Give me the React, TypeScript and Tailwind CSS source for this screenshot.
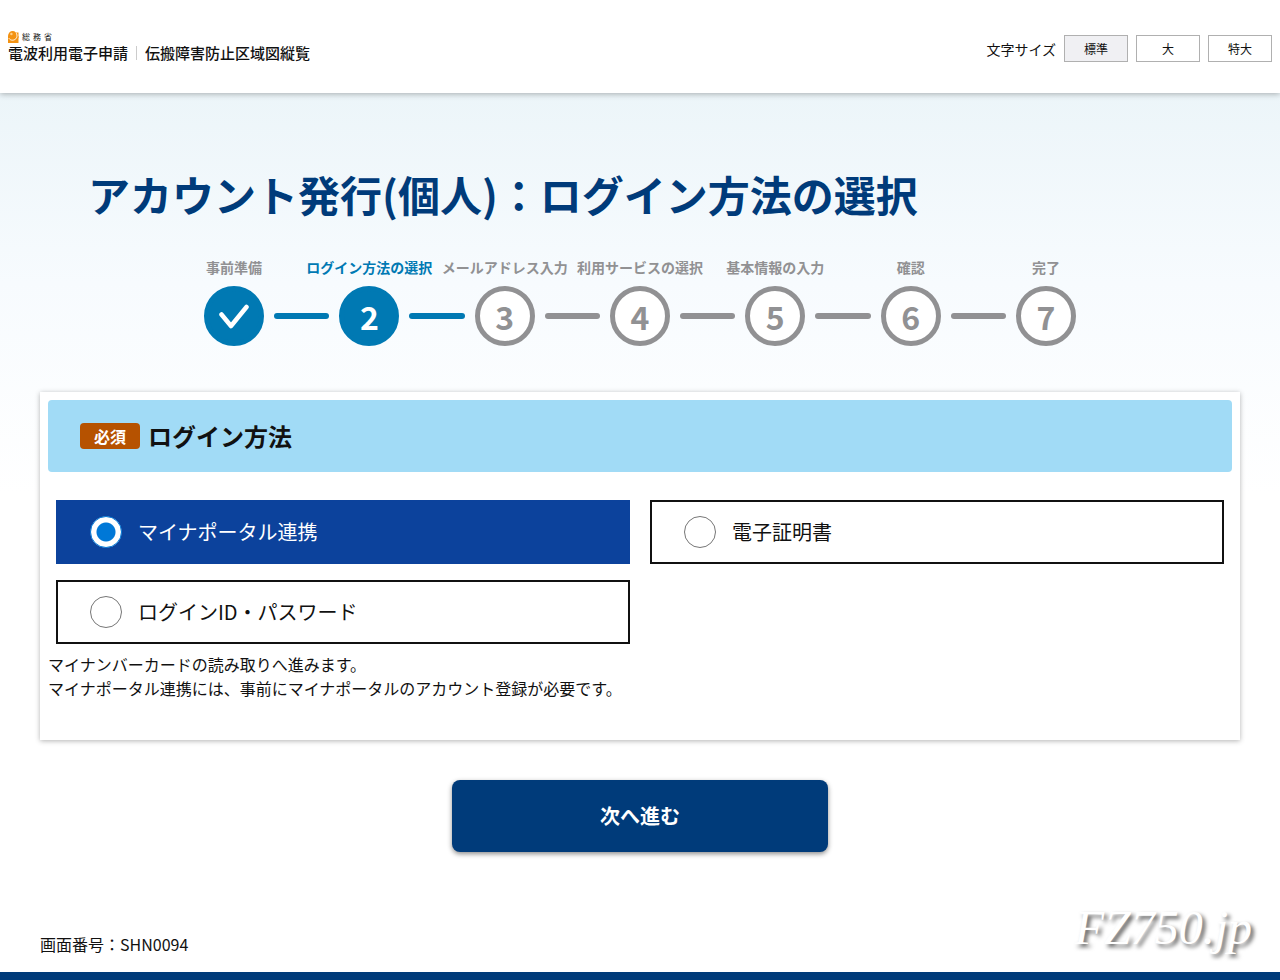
import { useState } from "react";

const STEPS = [
  "事前準備",
  "ログイン方法の選択",
  "メールアドレス入力",
  "利用サービスの選択",
  "基本情報の入力",
  "確認",
  "完了",
];
const CURRENT = 1;

const SIZES = ["標準", "大", "特大"];

const METHODS = [
  { id: "myna", label: "マイナポータル連携" },
  { id: "cert", label: "電子証明書" },
  { id: "password", label: "ログインID・パスワード" },
];

export default function App() {
  const [method, setMethod] = useState("myna");

  return (
    <div className="flex min-h-screen flex-col bg-white font-['Noto_Sans_CJK_JP',sans-serif] text-[#111]">
      <Header />

      <main className="flex-1 bg-[linear-gradient(to_bottom,#ecf5f9_0px,#f7fbfe_190px,#ffffff_400px)] px-10 pt-[70px]">
        <h1 className="px-12 text-[42px] leading-[62px] font-bold text-[#003b7a]">
          アカウント発行(個人)：ログイン方法の選択
        </h1>

        <Stepper />

        <section className="mt-[46px] bg-white p-2 pb-10 shadow-[0_1px_5px_rgba(0,0,0,0.3)]">
          <div className="flex h-[72px] items-center gap-2 rounded bg-[#a1dbf6] px-8">
            <span className="rounded bg-[#b65200] px-[14px] py-px text-base leading-6 font-bold text-white">
              必須
            </span>
            <h2 id="method-title" className="text-2xl font-bold">
              ログイン方法
            </h2>
          </div>

          <div
            role="radiogroup"
            aria-labelledby="method-title"
            className="mt-7 grid grid-cols-2 gap-x-5 gap-y-4 px-2"
          >
            {METHODS.map((m) => (
              <label
                key={m.id}
                className={`flex h-16 cursor-pointer items-center gap-4 border-2 px-8 text-xl ${
                  method === m.id
                    ? "border-[#0c429c] bg-[#0c429c] text-white"
                    : "border-[#111] bg-white"
                }`}
              >
                <input
                  type="radio"
                  name="method"
                  value={m.id}
                  checked={method === m.id}
                  onChange={() => setMethod(m.id)}
                  className="size-8 shrink-0 appearance-none rounded-full border border-[#767676] bg-white checked:border-[#0078d7] checked:bg-[radial-gradient(circle,#0078d7_9px,#ffffff_10px)]"
                />
                {m.label}
              </label>
            ))}
          </div>

          <p className="mt-2 text-base leading-6">
            マイナンバーカードの読み取りへ進みます。
            <br />
            マイナポータル連携には、事前にマイナポータルのアカウント登録が必要です。
          </p>
        </section>

        <div className="mt-10 flex justify-center">
          <button
            type="button"
            className="h-[72px] w-full max-w-[376px] rounded-lg bg-[#003b7a] text-xl font-bold text-white shadow-[0_2px_5px_rgba(0,0,0,0.45)]"
          >
            次へ進む
          </button>
        </div>
      </main>

      <footer className="flex items-end justify-between border-b-8 border-[#003b7a] pr-7 pb-4 pl-10">
        <p className="text-base leading-6">画面番号：SHN0094</p>
        <span className="pb-1 font-['Liberation_Serif',serif] text-5xl text-white italic [text-shadow:3px_3px_4px_rgba(0,0,0,0.65)]">
          FZ750.jp
        </span>
      </footer>
    </div>
  );
}

function Header() {
  const [size, setSize] = useState("標準");

  return (
    <header className="relative z-10 flex h-[93px] items-center justify-between bg-white px-2 shadow-[0_1px_6px_rgba(0,0,0,0.3)]">
      <a href="#" className="flex flex-col">
        <span className="flex items-center gap-[3px] text-[8px] leading-3">
          <svg width="11" height="12" viewBox="0 0 11 12" aria-hidden>
            <path d="M0 5h10.5v7H0z" fill="#f39212" />
            <path d="M6 1.5h4.5V7H6z" fill="#f39212" />
            <circle cx="4.6" cy="4.6" r="4.5" fill="#f39212" />
            <path
              d="M.8 7.2C2.8 10.2 7 9.7 8.5 6.8 9.3 5.2 9.1 3 8 1.6"
              fill="none"
              stroke="#fff"
              strokeWidth=".9"
            />
            <circle cx="3.4" cy="3" r="1.2" fill="#ffd08a" />
          </svg>
          <span className="flex gap-[3px]">
            <span>総</span>
            <span>務</span>
            <span>省</span>
          </span>
        </span>
        <span className="flex items-center text-[15px] leading-5 font-medium">
          電波利用電子申請
          <span className="mx-2 h-[14px] w-px bg-[#ccc]" />
          伝搬障害防止区域図縦覧
        </span>
      </a>

      <div className="flex items-center gap-2 pt-1">
        <span className="text-sm">文字サイズ</span>
        {SIZES.map((s) => (
          <button
            key={s}
            type="button"
            aria-pressed={size === s}
            onClick={() => setSize(s)}
            className={`h-[27px] w-16 border border-[#b0b0b0] text-xs ${
              size === s ? "bg-[#f0f0f3]" : "bg-white"
            }`}
          >
            {s}
          </button>
        ))}
      </div>
    </header>
  );
}

function Stepper() {
  return (
    <ol className="mx-auto mt-8 flex max-w-[872px]">
      {STEPS.map((label, i) => {
        const active = i <= CURRENT;
        return (
          <li
            key={label}
            aria-current={i === CURRENT ? "step" : undefined}
            className="flex flex-1 items-end last:flex-none"
          >
            <div className="flex w-[60px] shrink-0 flex-col items-center gap-2">
              <span
                className={`text-sm leading-[21px] font-bold whitespace-nowrap ${
                  i === CURRENT ? "text-[#0079b3]" : "text-[#919193]"
                }`}
              >
                {label}
              </span>
              <span
                className={`flex size-[60px] items-center justify-center rounded-full border-[5px] text-[32px] font-bold ${
                  active
                    ? "border-[#0079b3] bg-[#0079b3] text-white"
                    : "border-[#919193] bg-white text-[#919193]"
                }`}
              >
                {i < CURRENT ? <CheckMark /> : i + 1}
              </span>
            </div>
            {i < STEPS.length - 1 && (
              <span
                className={`mx-[10px] mb-[27px] h-[6px] flex-1 rounded-full ${
                  active ? "bg-[#0079b3]" : "bg-[#919193]"
                }`}
              />
            )}
          </li>
        );
      })}
    </ol>
  );
}

function CheckMark() {
  return (
    <svg width="32" height="26" viewBox="0 0 32 26" fill="none" aria-hidden>
      <path
        d="M3.5 11.5 13 23 28.5 4"
        stroke="currentColor"
        strokeWidth="4.5"
        strokeLinecap="round"
        strokeLinejoin="round"
      />
    </svg>
  );
}
